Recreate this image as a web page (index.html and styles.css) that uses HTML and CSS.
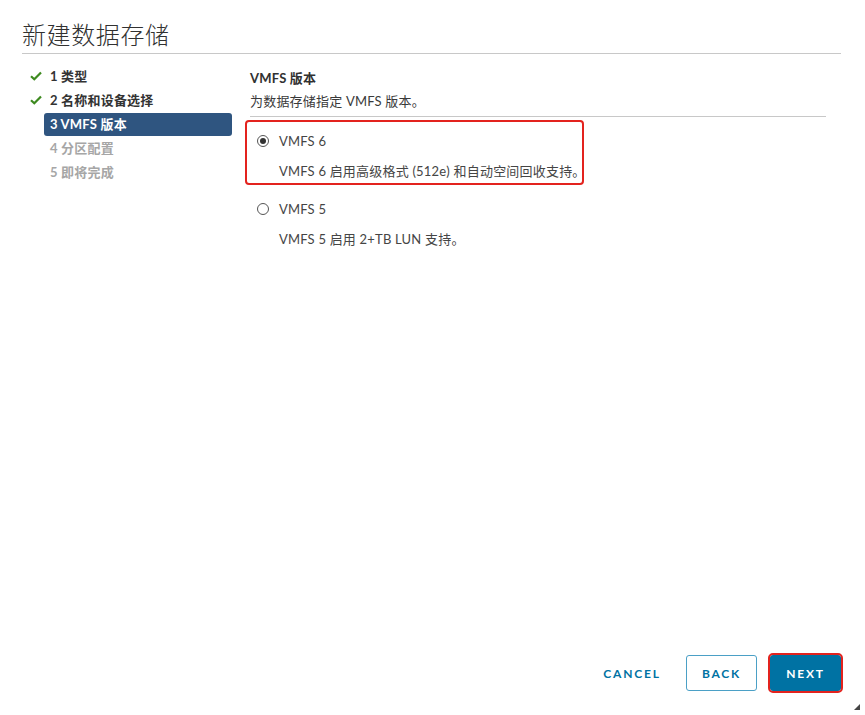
FILE: index.html
```html
<!DOCTYPE html>
<html>
<head>
<meta charset="utf-8">
<title>新建数据存储</title>
<link rel="stylesheet" href="styles.css">
</head>
<body>
<div class="wizard">
	<div class="wizard_title">
		<h1>新建数据存储</h1>
	</div>
	<div class="wizard_body">
		<ul class="steps">
			<li class="done"><span class="chk"><svg width="12" height="10" viewBox="0 0 12 10"><path d="M1 5.2 L4.3 8.3 L11 1.5" fill="none" stroke="#3d8a1f" stroke-width="2.2"/></svg></span><span class="lbl">1 类型</span></li>
			<li class="done"><span class="chk"><svg width="12" height="10" viewBox="0 0 12 10"><path d="M1 5.2 L4.3 8.3 L11 1.5" fill="none" stroke="#3d8a1f" stroke-width="2.2"/></svg></span><span class="lbl">2 名称和设备选择</span></li>
			<li class="active"><span class="chk"></span><span class="lbl">3 VMFS 版本</span></li>
			<li class="todo"><span class="chk"></span><span class="lbl">4 分区配置</span></li>
			<li class="todo"><span class="chk"></span><span class="lbl">5 即将完成</span></li>
		</ul>
		<div class="page">
			<div class="page_head">
				<h2>VMFS 版本</h2>
				<p>为数据存储指定 VMFS 版本。</p>
			</div>
			<div class="option marked">
				<div class="opt_row"><span class="radio on"></span>VMFS 6</div>
				<div class="opt_desc">VMFS 6 启用高级格式 (512e) 和自动空间回收支持。</div>
			</div>
			<div class="option">
				<div class="opt_row"><span class="radio"></span>VMFS 5</div>
				<div class="opt_desc">VMFS 5 启用 2+TB LUN 支持。</div>
			</div>
		</div>
	</div>
	<div class="wizard_foot">
		<button class="btn flat">CANCEL</button>
		<button class="btn outline">BACK</button>
		<button class="btn primary marked_btn">NEXT</button>
	</div>
	<span class="grip"></span>
</div>
</body>
</html>
```
FILE: styles.css
```css
html, body{
	margin:0;
	padding:0;
	background:#fff;
}
body{
	font-family: Lato, "Noto Sans CJK SC", sans-serif;
	color:#3a3a3a;
	font-size:13px;
}
.wizard{
	position:relative;
	height:715px;
	display:flex;
	flex-direction:column;
	box-sizing:border-box;
}
.wizard_title{
	margin:0 24px 0 22px;
	border-bottom:1px solid #c8c8c8;
	height:54px;
	box-sizing:border-box;
}
.wizard_title h1{
	margin:0;
	padding-top:20px;
	font-size:24px;
	font-weight:300;
	line-height:30px;
	color:#313131;
	letter-spacing:0.6px;
}
.wizard_body{
	flex:1;
	display:flex;
	padding-top:10px;
}
/* left step list */
.steps{
	list-style:none;
	margin:0 0 0 30px;
	padding:0;
	width:202px;
}
.steps li{
	display:flex;
	align-items:center;
	height:24px;
}
.steps .chk{
	width:14px;
	display:flex;
	align-items:center;
}
.steps .lbl{
	flex:1;
	padding:0 6px;
	line-height:23px;
	font-weight:700;
	color:#333;
	border-radius:3px;
	letter-spacing:0.2px;
}
.steps .active .lbl{
	background:#2f5580;
	color:#fff;
	margin-top:1px;
}
.steps .todo .lbl{
	color:#a6a6a6;
}
/* right page */
.page{
	margin-left:18px;
	width:576px;
	padding-top:3px;
}
.page_head{
	border-bottom:1px solid #c8c8c8;
	padding-bottom:4px;
	margin-bottom:3px;
}
.page_head h2{
	margin:0;
	font-size:13px;
	font-weight:700;
	line-height:22px;
	color:#313131;
	letter-spacing:0.2px;
}
.page_head p{
	margin:0;
	padding-top:1px;
	line-height:22px;
	letter-spacing:0.2px;
}
.option{
	border:2px solid transparent;
	border-radius:4px;
	margin-left:-5px;
	padding:8px 0 1px 10px;
	width:339px;
	box-sizing:border-box;
	color:#454545;
	letter-spacing:0.2px;
}
.option + .option{
	margin-top:3px;
}
.option.marked{
	border-color:#e3231e;
}
.opt_row{
	display:flex;
	align-items:center;
	line-height:22px;
}
.opt_desc{
	margin-top:8px;
	padding-left:22px;
	line-height:22px;
	white-space:nowrap;
}
.radio{
	width:10px;
	height:10px;
	border:1px solid #555;
	border-radius:50%;
	margin-right:10px;
	position:relative;
	box-sizing:content-box;
}
.radio.on:after{
	content:"";
	position:absolute;
	left:2px;
	top:2px;
	width:6px;
	height:6px;
	border-radius:50%;
	background:#333;
}
/* footer buttons */
.wizard_foot{
	display:flex;
	justify-content:flex-end;
	align-items:center;
	padding:0 24px 24px 0;
}
.btn{
	height:36px;
	font-family: Lato, sans-serif;
	font-size:12px;
	font-weight:700;
	letter-spacing:1.8px;
	border-radius:3px;
	padding:0;
	cursor:pointer;
	background:#fff;
	color:#0072a3;
	box-sizing:border-box;
}
.btn.flat{
	border:none;
	width:80px;
	margin-right:14px;
}
.btn.outline{
	border:1px solid #4ba0c6;
	width:71px;
	margin-right:13px;
}
.btn.primary{
	border:none;
	background:#0072a3;
	color:#fff;
	width:71px;
}
.marked_btn{
	outline:2px solid #e3231e;
	outline-offset:0;
}
.grip{
	position:absolute;
	right:5px;
	bottom:5px;
	width:0;
	height:0;
	border-left:6px solid transparent;
	border-bottom:6px solid #444;
}
```
